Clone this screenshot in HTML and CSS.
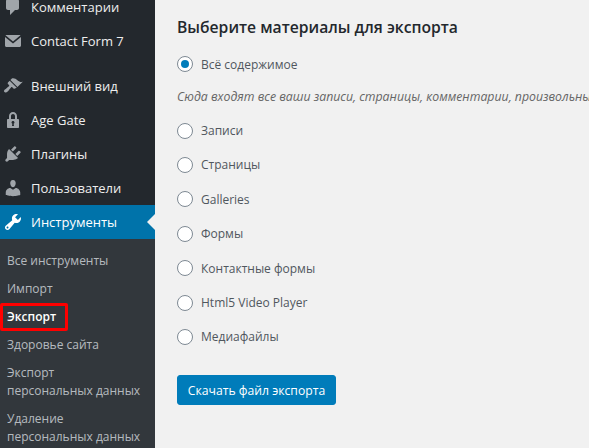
FILE: index.html
```html
<!DOCTYPE html>
<html lang="ru">
<head>
    <meta charset="UTF-8">
    <title>Экспорт</title>
    <link rel="stylesheet" href="styles.css">
</head>
<body>
    <div class="layout">
        <div class="sidebar">
            <ul class="menu">
                <li class="menu-item">
                    <svg class="menu-icon" viewBox="0 0 20 20"><path d="M5 2h9c1.1 0 2 .9 2 2v7c0 1.100-.9 2-2 2h-2l-5 5v-5H5c-1.100 0-2-.9-2-2V4c0-1.100.9-2 2-2z"/></svg>
                    Комментарии
                </li>
                <li class="menu-item menu-item-last">
                    <svg class="menu-icon" viewBox="0 0 20 20"><path d="M3.500 4h13c.5 0 .8.100 1 .3L10 10.500 2.500 4.300c.2-.2.5-.3 1-.3zM2 6l8 6.500L18 6v8.500c0 .8-.7 1.500-1.500 1.500h-13C2.700 16 2 15.300 2 14.500V6z"/></svg>
                    Contact Form 7
                </li>
                <li class="menu-item">
                    <svg class="menu-icon" viewBox="0 0 20 20"><path d="M14.480 11.060L7.410 3.990l1.500-1.500c.5-.56 2.300-.47 3.510.32 1.210.8 1.430 1.280 2.910 2.100 1.180.64 2.450 1.260 4.450.85zm-.71.71L6.700 4.700 4.930 6.470c-.39.39-.39 1.020 0 1.410l1.060 1.060c.39.39.39 1.030 0 1.420-.6.6-1.430 1.110-2.210 1.690-.35.26-.7.53-1.010.84C1.430 13.230.4 14.980 1.400 16c.99 1 2.750-.03 4.090-1.370.31-.31.58-.66.84-1.010.58-.78 1.090-1.610 1.690-2.210.39-.39 1.030-.39 1.420 0l1.060 1.060c.39.39 1.020.39 1.410 0z"/></svg>
                    Внешний вид
                </li>
                <li class="menu-item">
                    <svg class="menu-icon" viewBox="0 0 20 20"><path d="M14 9h1c.55 0 1 .45 1 1v7c0 .55-.45 1-1 1H5c-.55 0-1-.45-1-1v-7c0-.55.45-1 1-1h1V6c0-2.210 1.790-4 4-4s4 1.790 4 4v3zm-2 0V6c0-1.100-.9-2-2-2s-2 .9-2 2v3h4zm-1 7l-.36-2.150c.51-.24.86-.75.86-1.350 0-.83-.67-1.500-1.500-1.500s-1.500.67-1.500 1.500c0 .6.35 1.110.86 1.350L9 16h2z"/></svg>
                    Age Gate
                </li>
                <li class="menu-item">
                    <svg class="menu-icon" viewBox="0 0 20 20"><path d="M13.110 4.360L9.870 7.600 8 5.730l3.240-3.240c.35-.34 1.050-.2 1.560.32.52.51.66 1.210.31 1.550zm-8 1.770l.91-1.120 9.010 9.010-1.190.84c-.71.71-2.630 1.160-3.820 1.160H6.140L4.900 17.260c-.59.59-1.540.59-2.120 0-.59-.58-.59-1.530 0-2.120l1.240-1.240v-3.880c0-1.130.4-3.190 1.090-3.890zm7.260 3.970l3.240-3.240c.34-.35 1.040-.21 1.550.31.52.51.66 1.210.31 1.550l-3.240 3.250z"/></svg>
                    Плагины
                </li>
                <li class="menu-item">
                    <svg class="menu-icon" viewBox="0 0 20 20"><path d="M10 9.250c-2.270 0-2.730-3.440-2.730-3.440C7 4.020 7.820 2 9.970 2c2.160 0 2.980 2.020 2.710 3.810 0 0-.41 3.440-2.680 3.440zm0 2.570L12.720 10c2.390 0 4.520 2.330 4.520 4.530v2.490s-3.650 1.130-7.240 1.130c-3.650 0-7.240-1.130-7.240-1.130v-2.490c0-2.250 1.940-4.480 4.470-4.480z"/></svg>
                    Пользователи
                </li>
                <li class="menu-item menu-item-current">
                    <svg class="menu-icon" viewBox="0 0 20 20"><path d="M16.680 9.770c-1.340 1.340-3.300 1.670-4.950.99l-5.410 6.520c-.99.99-2.590.99-3.580 0s-.99-2.590 0-3.570l6.520-5.420c-.68-1.650-.35-3.610.99-4.950 1.280-1.280 3.120-1.620 4.720-1.060l-2.890 2.890 2.820 2.820 2.860-2.870c.53 1.580.18 3.390-1.080 4.650zM3.810 16.210c.4.39 1.040.39 1.430 0 .4-.4.4-1.040 0-1.430-.39-.4-1.030-.4-1.430 0-.39.39-.39 1.030 0 1.430z"/></svg>
                    Инструменты
                </li>
            </ul>
            <ul class="submenu">
                <li>Все инструменты</li>
                <li>Импорт</li>
                <li class="submenu-current">Экспорт</li>
                <li>Здоровье сайта</li>
                <li>Экспорт<br>персональных данных</li>
                <li>Удаление<br>персональных данных</li>
            </ul>
        </div>

        <div class="content">
            <h2>Выберите материалы для экспорта</h2>

            <label class="radio-row"><span class="radio radio-checked"></span>Всё содержимое</label>
            <p class="note">Сюда входят все ваши записи, страницы, комментарии, произвольные поля, условия, меню навигации и произвольные типы записей.</p>

            <label class="radio-row"><span class="radio"></span>Записи</label>
            <label class="radio-row"><span class="radio"></span>Страницы</label>
            <label class="radio-row"><span class="radio"></span>Galleries</label>
            <label class="radio-row"><span class="radio"></span>Формы</label>
            <label class="radio-row"><span class="radio"></span>Контактные формы</label>
            <label class="radio-row"><span class="radio"></span>Html5 Video Player</label>
            <label class="radio-row"><span class="radio"></span>Медиафайлы</label>

            <button class="download">Скачать файл экспорта</button>
        </div>
    </div>
</body>
</html>
```

FILE: styles.css
```css
:root {
    --sidebar: #23282d;
    --submenu: #32373c;
    --accent: #0073aa;
    --bg: #f1f1f1;
    --text: #50575e;
}

html, body {
    height: 448px;
    overflow: hidden;
}

body {
    margin: 0;
    background-color: var(--bg);
    color: var(--text);
    font-family: "Open Sans", "Noto Sans", sans-serif;
    font-size: 12px;
}

ul {
    list-style: none;
    margin: 0;
    padding: 0;
}

.layout {
    display: flex;
    height: 448px;
}

.sidebar {
    width: 155px;
    flex-shrink: 0;
    background-color: var(--sidebar);
    /* the page is scrolled down a little in the shot */
    margin-top: -10px;
    height: 458px;
}

.menu-item {
    display: flex;
    align-items: center;
    gap: 8px;
    height: 34px;
    padding-left: 3px;
    color: #eee;
    font-size: 13px;
    white-space: nowrap;
}

.menu-item-last {
    margin-bottom: 11px;
}

.menu-icon {
    width: 20px;
    height: 20px;
    fill: #a0a5aa;
    flex-shrink: 0;
}

.menu-item-current {
    position: relative;
    background-color: var(--accent);
    color: #fff;
}

.menu-item-current .menu-icon {
    fill: #fff;
}

.menu-item-current::after {
    content: "";
    position: absolute;
    right: 0;
    top: 9px;
    border: 8px solid transparent;
    border-left-width: 0;
    border-right-color: var(--bg);
}

.submenu {
    background-color: var(--submenu);
    padding: 8px 0 6px;
    height: 209px;
    overflow: hidden;
}

.submenu li {
    padding: 5px 0 5px 7px;
    line-height: 18px;
    color: rgba(240, 245, 250, 0.7);
    white-space: nowrap;
}

.submenu .submenu-current {
    position: relative;
    color: #fff;
    font-weight: 600;
}

.submenu-current::after {
    content: "";
    position: absolute;
    left: 0;
    top: 0;
    width: 62px;
    height: 22px;
    border: 3px solid #f00;
    border-radius: 2px;
}

.content {
    flex: 1;
    min-width: 0;
    padding: 16px 0 0 22px;
    overflow: hidden;
}

h2 {
    margin: 0 0 9px;
    font-size: 15.7px;
    line-height: 22px;
    font-weight: 600;
    color: #23282d;
    white-space: nowrap;
}

.radio-row {
    display: flex;
    align-items: center;
    gap: 8px;
    height: 34.4px;
    white-space: nowrap;
}

.radio {
    width: 14px;
    height: 14px;
    border: 1px solid #7e8993;
    border-radius: 50%;
    background-color: #fff;
    display: flex;
    align-items: center;
    justify-content: center;
    flex-shrink: 0;
}

.radio-checked::before {
    content: "";
    width: 8px;
    height: 8px;
    border-radius: 50%;
    background-color: #007cba;
}

.note {
    margin: 0;
    height: 32px;
    line-height: 32px;
    font-size: 12.3px;
    font-style: italic;
    color: #666;
    white-space: nowrap;
}

.download {
    display: block;
    margin-top: 21px;
    width: 159px;
    height: 30px;
    padding: 0;
    background-color: #007cba;
    color: #fff;
    border: 1px solid #007cba;
    border-radius: 3px;
    font-family: inherit;
    font-size: 12.200px;
}
```
